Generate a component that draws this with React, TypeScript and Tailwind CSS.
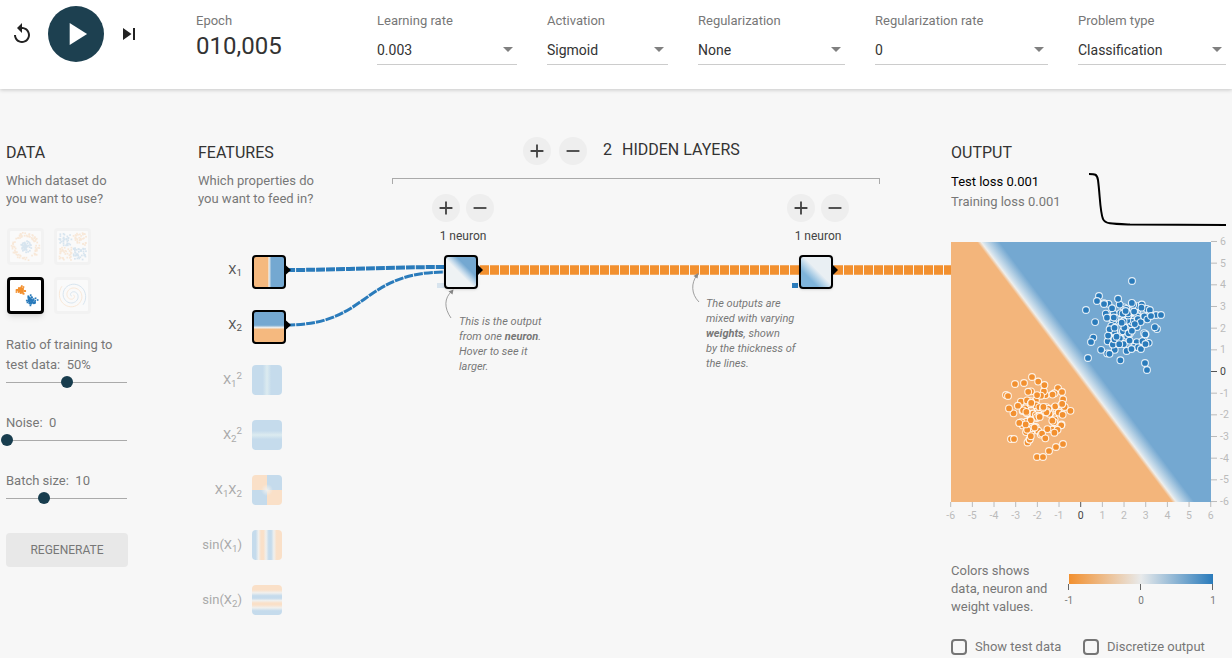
import { ReactNode } from 'react';

// seeded random so the scatter stays the same on every render
function makeRandom(seed: number) {
  let s = seed;
  return () => {
    s = (s + 0x6d2b79f5) | 0;
    let t = Math.imul(s ^ (s >>> 15), 1 | s);
    t = (t + Math.imul(t ^ (t >>> 7), 61 | t)) ^ t;
    return ((t ^ (t >>> 14)) >>> 0) / 4294967296;
  };
}

function gaussian(rand: () => number) {
  return Math.sqrt(-2 * Math.log(rand() + 1e-6)) * Math.cos(2 * Math.PI * rand());
}

const toX = (v: number) => 1081 + 21.67 * v;
const toY = (v: number) => 371.5 - 21.67 * v;

function cluster(seed: number, cx: number, cy: number, n: number, sd: number) {
  const rand = makeRandom(seed);
  const pts: [number, number][] = [];
  while (pts.length < n) {
    const x = gaussian(rand) * sd;
    const y = gaussian(rand) * sd;
    if (Math.hypot(x, y) < 1.55) pts.push([toX(cx + x), toY(cy + y)]);
  }
  return pts;
}

const bluePoints: [number, number][] = [
  ...cluster(11, 2.05, 2.0, 92, 0.72),
  [1132, 281], [1099, 296], [1097, 301], [1104, 304], [1086, 310], [1156, 315], [1161, 315], [1151, 316],
  [1091, 342], [1088, 358], [1145, 363], [1147, 370],
];
const orangePoints: [number, number][] = [
  ...cluster(29, -2.0, -1.95, 92, 0.72),
  [1032, 377], [1015, 384], [1024, 383], [1006, 395], [1062, 392], [1008, 396], [1011, 439], [1014, 439],
  [1037, 457], [1043, 457], [1049, 451], [1056, 447], [1063, 444],
];

function DatasetThumb({ kind, selected }: { kind: string; selected?: boolean }) {
  const rand = makeRandom(kind.length * 97 + 5);
  const dots: { x: number; y: number; c: string }[] = [];
  const blue = '#2a7bbb';
  const orange = '#f2902f';
  if (kind === 'circle') {
    for (let i = 0; i < 80; i++) {
      const a = rand() * Math.PI * 2;
      const r = 10 + rand() * 4;
      dots.push({ x: 15.5 + r * Math.cos(a), y: 15.5 + r * Math.sin(a), c: orange });
    }
    for (let i = 0; i < 60; i++) {
      const a = rand() * Math.PI * 2;
      const r = rand() * 6;
      dots.push({ x: 15.5 + r * Math.cos(a), y: 15.5 + r * Math.sin(a), c: blue });
    }
  } else if (kind === 'xor') {
    for (let i = 0; i < 170; i++) {
      const x = 2 + rand() * 27;
      const y = 2 + rand() * 27;
      if (Math.abs(x - 15.5) < 1 || Math.abs(y - 15.5) < 1) continue;
      dots.push({ x, y, c: (x - 15.5) * (y - 15.5) > 0 ? blue : orange });
    }
  } else if (kind === 'gauss') {
    for (let i = 0; i < 50; i++) {
      dots.push({ x: 10.5 + gaussian(rand) * 2, y: 10.5 + gaussian(rand) * 1.7, c: orange });
      dots.push({ x: 21 + gaussian(rand) * 2.4, y: 21 + gaussian(rand) * 2.2, c: blue });
    }
  }

  const spiral = (offset: number) => {
    const parts: string[] = [];
    for (let i = 0; i <= 60; i++) {
      const t = i / 60;
      const a = t * Math.PI * 3.4 + offset;
      const r = 1 + t * 13;
      parts.push(`${i === 0 ? 'M' : 'L'}${(15.5 + r * Math.cos(a)).toFixed(1)} ${(15.5 + r * Math.sin(a)).toFixed(1)}`);
    }
    return parts.join(' ');
  };

  return (
    <div
      className={
        selected
          ? 'w-[37px] h-[37px] border-[3px] border-black rounded bg-white shadow-md overflow-hidden'
          : 'w-[37px] h-[37px] border-[3px] border-[#f2f2f2] rounded bg-[#fafafa] overflow-hidden'
      }
    >
      <svg viewBox="0 0 31 31" className="w-full h-full">
        <g opacity={selected ? 1 : 0.16}>
          {dots.map((d, i) => (
            <rect key={i} x={d.x - 0.8} y={d.y - 0.8} width="1.7" height="1.7" fill={d.c} />
          ))}
          {kind === 'spiral' && (
            <>
              <path d={spiral(2.6)} fill="none" stroke={blue} strokeWidth="1" />
              <path d={spiral(5.74)} fill="none" stroke={orange} strokeWidth="1" />
            </>
          )}
        </g>
      </svg>
    </div>
  );
}

function Select({ label, value, width }: { label: string; value: string; width: string }) {
  return (
    <div className={width}>
      <div className="text-[13px] leading-[18px] text-[#777777] h-[19px] pt-px">{label}</div>
      <div className="flex items-center justify-between h-[34px] mt-px pt-1 pr-1 border-b border-[#cccccc] text-sm text-[#333333]">
        <span>{value}</span>
        <svg width="10" height="5" viewBox="0 0 10 5">
          <path d="M0 0h10L5 5z" fill="#808080" />
        </svg>
      </div>
    </div>
  );
}

function Slider({ thumb }: { thumb: string }) {
  return (
    <div className="relative h-3 w-[121px] flex items-center">
      <div className="h-px w-full bg-[#aaaaaa]" />
      <div className={`absolute top-0 w-3 h-3 rounded-full bg-[#183d4e] ${thumb}`} />
    </div>
  );
}

function RoundButton({ minus }: { minus?: boolean }) {
  return (
    <div className="w-7 h-7 rounded-full bg-[#eeeeee] flex items-center justify-center">
      <svg width="22" height="22" viewBox="0 0 24 24" fill="#444444">
        <path d={minus ? 'M19 13H5v-2h14v2z' : 'M19 13h-6v6h-2v-6H5v-2h6V5h2v6h6v2z'} />
      </svg>
    </div>
  );
}

function FeatureRow({ label, bg, active }: { label: ReactNode; bg: string; active?: boolean }) {
  return (
    <div className="h-[55px] flex items-start">
      <div
        className={`w-[44px] flex justify-end items-center whitespace-nowrap text-[13px] ${
          active ? 'text-[#555555] h-[34px] pb-1 text-sm' : 'text-[#aaaaaa] h-[30px]'
        }`}
      >
        <span>{label}</span>
      </div>
      <div
        className={
          active
            ? `relative ml-[10px] w-[34px] h-[34px] border-[2px] border-black rounded ${bg}`
            : `relative ml-[10px] w-[30px] h-[30px] rounded ${bg}`
        }
      />
    </div>
  );
}

function NeuronColumn({ className, node }: { className: string; node: string }) {
  return (
    <div className={`w-[70px] flex flex-col items-center ${className}`}>
      <div className="flex gap-[6px]">
        <RoundButton />
        <RoundButton minus />
      </div>
      <div className="mt-[6px] h-4 text-xs leading-4 text-[#444444]">1 neuron</div>
      <div className={`relative mt-[11px] mr-1 w-[34px] h-[34px] border-[2px] border-black rounded shadow-sm ${node}`} />
    </div>
  );
}

function Links() {
  const arrow = '#888888';
  return (
    <svg
      className="absolute left-0 top-0 w-[759px] h-[569px] pointer-events-none"
      viewBox="192 89 759 569"
    >
      <path d="M286 270 C340 270 390 267 446 267" fill="none" stroke="#2a7bbb" strokeWidth="4" strokeDasharray="9 1" />
      <path d="M286 325 C370 325 360 272 446 272" fill="none" stroke="#2a7bbb" strokeWidth="3" strokeDasharray="9 1" />
      <path d="M480 270 H800" fill="none" stroke="#f2902f" strokeWidth="9.5" strokeDasharray="9 1" />
      <path d="M834 270 H951" fill="none" stroke="#f2902f" strokeWidth="9.5" strokeDasharray="9 1" />
      <rect x="437" y="283" width="7" height="5" fill="#2a7bbb" opacity="0.15" />
      <rect x="792" y="283" width="6" height="5" fill="#2a7bbb" />
      <path d="M286 265.5 L291 270 L286 274.5z" fill="#000" />
      <path d="M286 320.5 L291 325 L286 329.5z" fill="#000" />
      <path d="M478 265 L483 270 L478 275z" fill="#000" />
      <path d="M833 265 L838 270 L833 275z" fill="#000" />
      <path d="M451 318 C444 308 444 298 452 291" fill="none" stroke={arrow} strokeWidth="0.8" />
      <path d="M453.5 289.5 L448.5 291.5 L452.5 294.5z" fill={arrow} />
      <path d="M699 302 C691 294 691 283 697 275" fill="none" stroke={arrow} strokeWidth="0.8" />
      <path d="M698.5 273 L693.5 276 L697.5 278.5z" fill={arrow} />
    </svg>
  );
}

function Plot() {
  const ticks = [-6, -5, -4, -3, -2, -1, 0, 1, 2, 3, 4, 5, 6];
  return (
    <svg className="block w-[281px] h-[286px] overflow-visible" viewBox="951 236 281 286">
      <defs>
        <linearGradient id="field" gradientUnits="userSpaceOnUse" x1="974" y1="248" x2="998" y2="230">
          <stop offset="0" stopColor="#f3b57b" />
          <stop offset="0.2" stopColor="#f3b57b" />
          <stop offset="0.31" stopColor="#eeeeec" />
          <stop offset="0.4" stopColor="#cfe0ec" />
          <stop offset="0.8" stopColor="#74a8d1" />
          <stop offset="1" stopColor="#74a8d1" />
        </linearGradient>
      </defs>
      <rect x="951" y="242" width="260" height="260" fill="url(#field)" />
      {bluePoints.map(([x, y], i) => (
        <circle key={i} cx={x} cy={y} r="3.4" fill="#2a7bbb" stroke="#ffffff" strokeOpacity="0.85" strokeWidth="1.1" />
      ))}
      {orangePoints.map(([x, y], i) => (
        <circle key={i} cx={x} cy={y} r="3.4" fill="#f2902f" stroke="#ffffff" strokeOpacity="0.85" strokeWidth="1.1" />
      ))}
      {ticks.map((t) => {
        const zero = t === 0;
        const c = zero ? '#555555' : '#bbbbbb';
        return (
          <g key={t}>
            <line x1={toX(t) - 0.3} x2={toX(t) - 0.3} y1="502" y2="507" stroke={c} />
            <text x={toX(t) - 0.3} y="519" fontSize="10.5" textAnchor="middle" fill={zero ? '#444444' : '#bbbbbb'}>
              {t}
            </text>
            <line x1="1211" x2="1217" y1={toY(t)} y2={toY(t)} stroke={c} />
            <text x="1220" y={toY(t) + 3.5} fontSize="10.5" fill={zero ? '#444444' : '#bbbbbb'}>
              {t}
            </text>
          </g>
        );
      })}
    </svg>
  );
}

function Legend() {
  return (
    <svg className="block -mt-px w-[163px] h-[54px]" viewBox="1064 561 163 54">
      <defs>
        <linearGradient id="legend">
          <stop offset="0" stopColor="#f2902f" />
          <stop offset="0.5" stopColor="#e8eaeb" />
          <stop offset="1" stopColor="#2a7bbb" />
        </linearGradient>
      </defs>
      <rect x="1069" y="574" width="144" height="10" fill="url(#legend)" />
      {[1069, 1141, 1213].map((x) => (
        <line key={x} x1={x - 0.5} x2={x - 0.5} y1="584" y2="590" stroke="#666666" />
      ))}
      <text x="1069" y="604" fontSize="10" textAnchor="middle" fill="#777777">-1</text>
      <text x="1141" y="604" fontSize="10" textAnchor="middle" fill="#777777">0</text>
      <text x="1213" y="604" fontSize="10" textAnchor="middle" fill="#777777">1</text>
    </svg>
  );
}

function Checkbox({ label, className }: { label: string; className?: string }) {
  return (
    <div className={`flex items-center h-4 ${className ?? ''}`}>
      <div className="w-4 h-4 border-2 border-[#757575] rounded-sm" />
      <span className="ml-2 text-[13px] text-[#777777] whitespace-nowrap">{label}</span>
    </div>
  );
}

export default function App() {
  return (
    <div className="h-[658px] overflow-hidden bg-[#f7f7f7] font-['Roboto',sans-serif]">
      {/* Top bar */}
      <header className="h-[89px] bg-white shadow-[0_1px_4px_rgba(0,0,0,0.2)] flex items-start relative">
        <div className="flex items-center h-[68px] pl-[10px] w-[196px]">
          <svg width="24" height="24" viewBox="0 0 24 24" fill="#222222">
            <path d="M12 5V1L7 6l5 5V7c3.31 0 6 2.69 6 6s-2.69 6-6 6-6-2.69-6-6H4c0 4.42 3.58 8 8 8s8-3.58 8-8-3.58-8-8-8z" />
          </svg>
          <div className="ml-[14px] w-14 h-14 rounded-full bg-[#1d4050] flex items-center justify-center">
            <svg width="38" height="38" viewBox="0 0 24 24" fill="#ffffff">
              <path d="M8 5v14l11-7z" />
            </svg>
          </div>
          <svg className="ml-[13px]" width="24" height="24" viewBox="0 0 24 24" fill="#222222">
            <path d="M6 18l8.5-6L6 6v12zM16 6v12h2V6h-2z" />
          </svg>
        </div>
        <div className="w-[181px] pt-[12px]">
          <div className="text-[13px] leading-[18px] text-[#777777]">Epoch</div>
          <div className="text-2xl leading-8 text-[#333333]">010,005</div>
        </div>
        <div className="flex gap-[30px] pt-[11px]">
          <Select label="Learning rate" value="0.003" width="w-[140px]" />
          <Select label="Activation" value="Sigmoid" width="w-[121px]" />
          <Select label="Regularization" value="None" width="w-[147px]" />
          <Select label="Regularization rate" value="0" width="w-[173px]" />
          <Select label="Problem type" value="Classification" width="w-[148px]" />
        </div>
      </header>

      <main className="flex items-start">
        {/* Data */}
        <section className="w-[192px] pl-[6px] pt-[52px]">
          <h4 className="text-base leading-6 text-[#333333] uppercase">Data</h4>
          <p className="mt-[7px] text-[13px] leading-[18px] text-[#777777]">
            Which dataset do
            <br />
            you want to use?
          </p>
          <div className="mt-[20px] ml-px grid grid-cols-[37px_37px] gap-x-[10px] gap-y-[12px]">
            <DatasetThumb kind="circle" />
            <DatasetThumb kind="xor" />
            <DatasetThumb kind="gauss" selected />
            <DatasetThumb kind="spiral" />
          </div>
          <p className="mt-[21px] text-[13px] leading-5 text-[#777777]">
            Ratio of training to
            <br />
            test data:&nbsp;&nbsp;50%
          </p>
          <div className="mt-px">
            <Slider thumb="left-[55px]" />
          </div>
          <p className="mt-[25px] text-[13px] leading-5 text-[#777777]">Noise:&nbsp;&nbsp;0</p>
          <div className="mt-px">
            <Slider thumb="-left-[5px]" />
          </div>
          <p className="mt-[25px] text-[13px] leading-5 text-[#777777]">Batch size:&nbsp;&nbsp;10</p>
          <div className="mt-px">
            <Slider thumb="left-[32px]" />
          </div>
          <div className="mt-[29px] w-[122px] h-[34px] bg-[#e8e8e8] rounded-sm flex items-center justify-center text-xs text-[#777777] uppercase">
            Regenerate
          </div>
        </section>

        {/* Network */}
        <section className="relative w-[759px] h-[569px] flex items-start">
          <Links />
          <div className="w-[200px] pl-[6px] pt-[52px]">
            <h4 className="text-base leading-6 text-[#333333] uppercase">Features</h4>
            <p className="mt-[7px] text-[13px] leading-[18px] text-[#777777]">
              Which properties do
              <br />
              you want to feed in?
            </p>
            <div className="mt-[47px]">
              <FeatureRow
                active
                label={<>X<sub>1</sub></>}
                bg="bg-[linear-gradient(90deg,#f5b97f_45%,#eeeeec_50%,#74a8d1_58%)]"
              />
              <FeatureRow
                active
                label={<>X<sub>2</sub></>}
                bg="bg-[linear-gradient(180deg,#74a8d1_44%,#eeeeec_52%,#f5b97f_58%)]"
              />
              <FeatureRow
                label={<>X<sub>1</sub><sup>2</sup></>}
                bg="bg-[linear-gradient(90deg,#c5dbec_36%,#dcebf0_50%,#c5dbec_64%)]"
              />
              <FeatureRow
                label={<>X<sub>2</sub><sup>2</sup></>}
                bg="bg-[linear-gradient(180deg,#c5dbec_36%,#dcebf0_50%,#c5dbec_64%)]"
              />
              <FeatureRow
                label={<>X<sub>1</sub>X<sub>2</sub></>}
                bg="bg-[radial-gradient(circle,#f0f0ee_0,transparent_6px),conic-gradient(#c5dbec_90deg,#fae0c8_90deg_180deg,#c5dbec_180deg_270deg,#fae0c8_270deg)]"
              />
              <FeatureRow
                label={<>sin(X<sub>1</sub>)</>}
                bg="bg-[linear-gradient(90deg,#c5dbec_12%,#f0f0ee_22%,#fae0c8_30%,#fae0c8_38%,#f0f0ee_47%,#c5dbec_56%,#c5dbec_64%,#f0f0ee_73%,#fae0c8_82%)]"
              />
              <FeatureRow
                label={<>sin(X<sub>2</sub>)</>}
                bg="bg-[linear-gradient(180deg,#fae0c8_16%,#f0f0ee_26%,#c5dbec_36%,#c5dbec_44%,#f0f0ee_52%,#fae0c8_60%,#fae0c8_66%,#f0f0ee_76%,#c5dbec_86%)]"
              />
            </div>
          </div>

          <div className="w-[559px] pt-[48px]">
            <div className="ml-[131px] h-7 flex items-center">
              <div className="flex items-center gap-2">
                <RoundButton />
                <RoundButton minus />
              </div>
              <span className="ml-[16px] -mt-[2px] text-base text-[#333333]">2</span>
              <span className="ml-[10px] -mt-[2px] text-base text-[#333333] uppercase">Hidden layers</span>
            </div>
            <div className="mt-[13px] w-[488px] h-[6px] border-t border-x border-[#aaaaaa]" />
            <div className="mt-[10px] flex">
              <NeuronColumn
                className="ml-[36px]"
                node="bg-[linear-gradient(45deg,#eef2f4_46%,#c5dbec_54%,#74a8d1_68%)]"
              />
              <NeuronColumn
                className="ml-[285px]"
                node="bg-[linear-gradient(225deg,#e9eff3_45%,#c5dcec_54%,#7fb4da_72%)]"
              />
            </div>
          </div>

          <p className="absolute left-[267px] top-[225px] text-[11px] leading-[15px] italic text-[#777777] whitespace-nowrap">
            This is the output
            <br />
            from one <b>neuron</b>.
            <br />
            Hover to see it
            <br />
            larger.
          </p>
          <p className="absolute left-[514px] top-[207px] text-[11px] leading-[15px] italic text-[#777777] whitespace-nowrap">
            The outputs are
            <br />
            mixed with varying
            <br />
            <b>weights</b>, shown
            <br />
            by the thickness of
            <br />
            the lines.
          </p>
        </section>

        {/* Output */}
        <section className="w-[281px] pt-[52px]">
          <h4 className="text-base leading-6 text-[#333333] uppercase">Output</h4>
          <div className="mt-[5px] h-[66px] flex justify-between pr-[6px]">
            <div className="pt-[2px] text-[13px] leading-5">
              <div className="text-black">Test loss 0.001</div>
              <div className="text-[#777777]">Training loss 0.001</div>
            </div>
            <svg className="w-[137px] h-[60px]" viewBox="1089 170 137 60">
              <path
                d="M1089 174 C1095 174 1097 174 1098 180 C1100 195 1100 212 1103 219 C1105 224 1112 224 1130 224.5 L1226 225"
                fill="none"
                stroke="#000000"
                strokeWidth="2"
              />
            </svg>
          </div>
          <Plot />
          <div className="mt-[40px] flex">
            <p className="w-[113px] text-[13px] leading-[18px] text-[#777777]">
              Colors shows
              <br />
              data, neuron and
              <br />
              weight values.
            </p>
            <Legend />
          </div>
          <div className="mt-[23px] flex">
            <Checkbox label="Show test data" className="w-[132px]" />
            <Checkbox label="Discretize output" />
          </div>
        </section>
      </main>
    </div>
  );
}
